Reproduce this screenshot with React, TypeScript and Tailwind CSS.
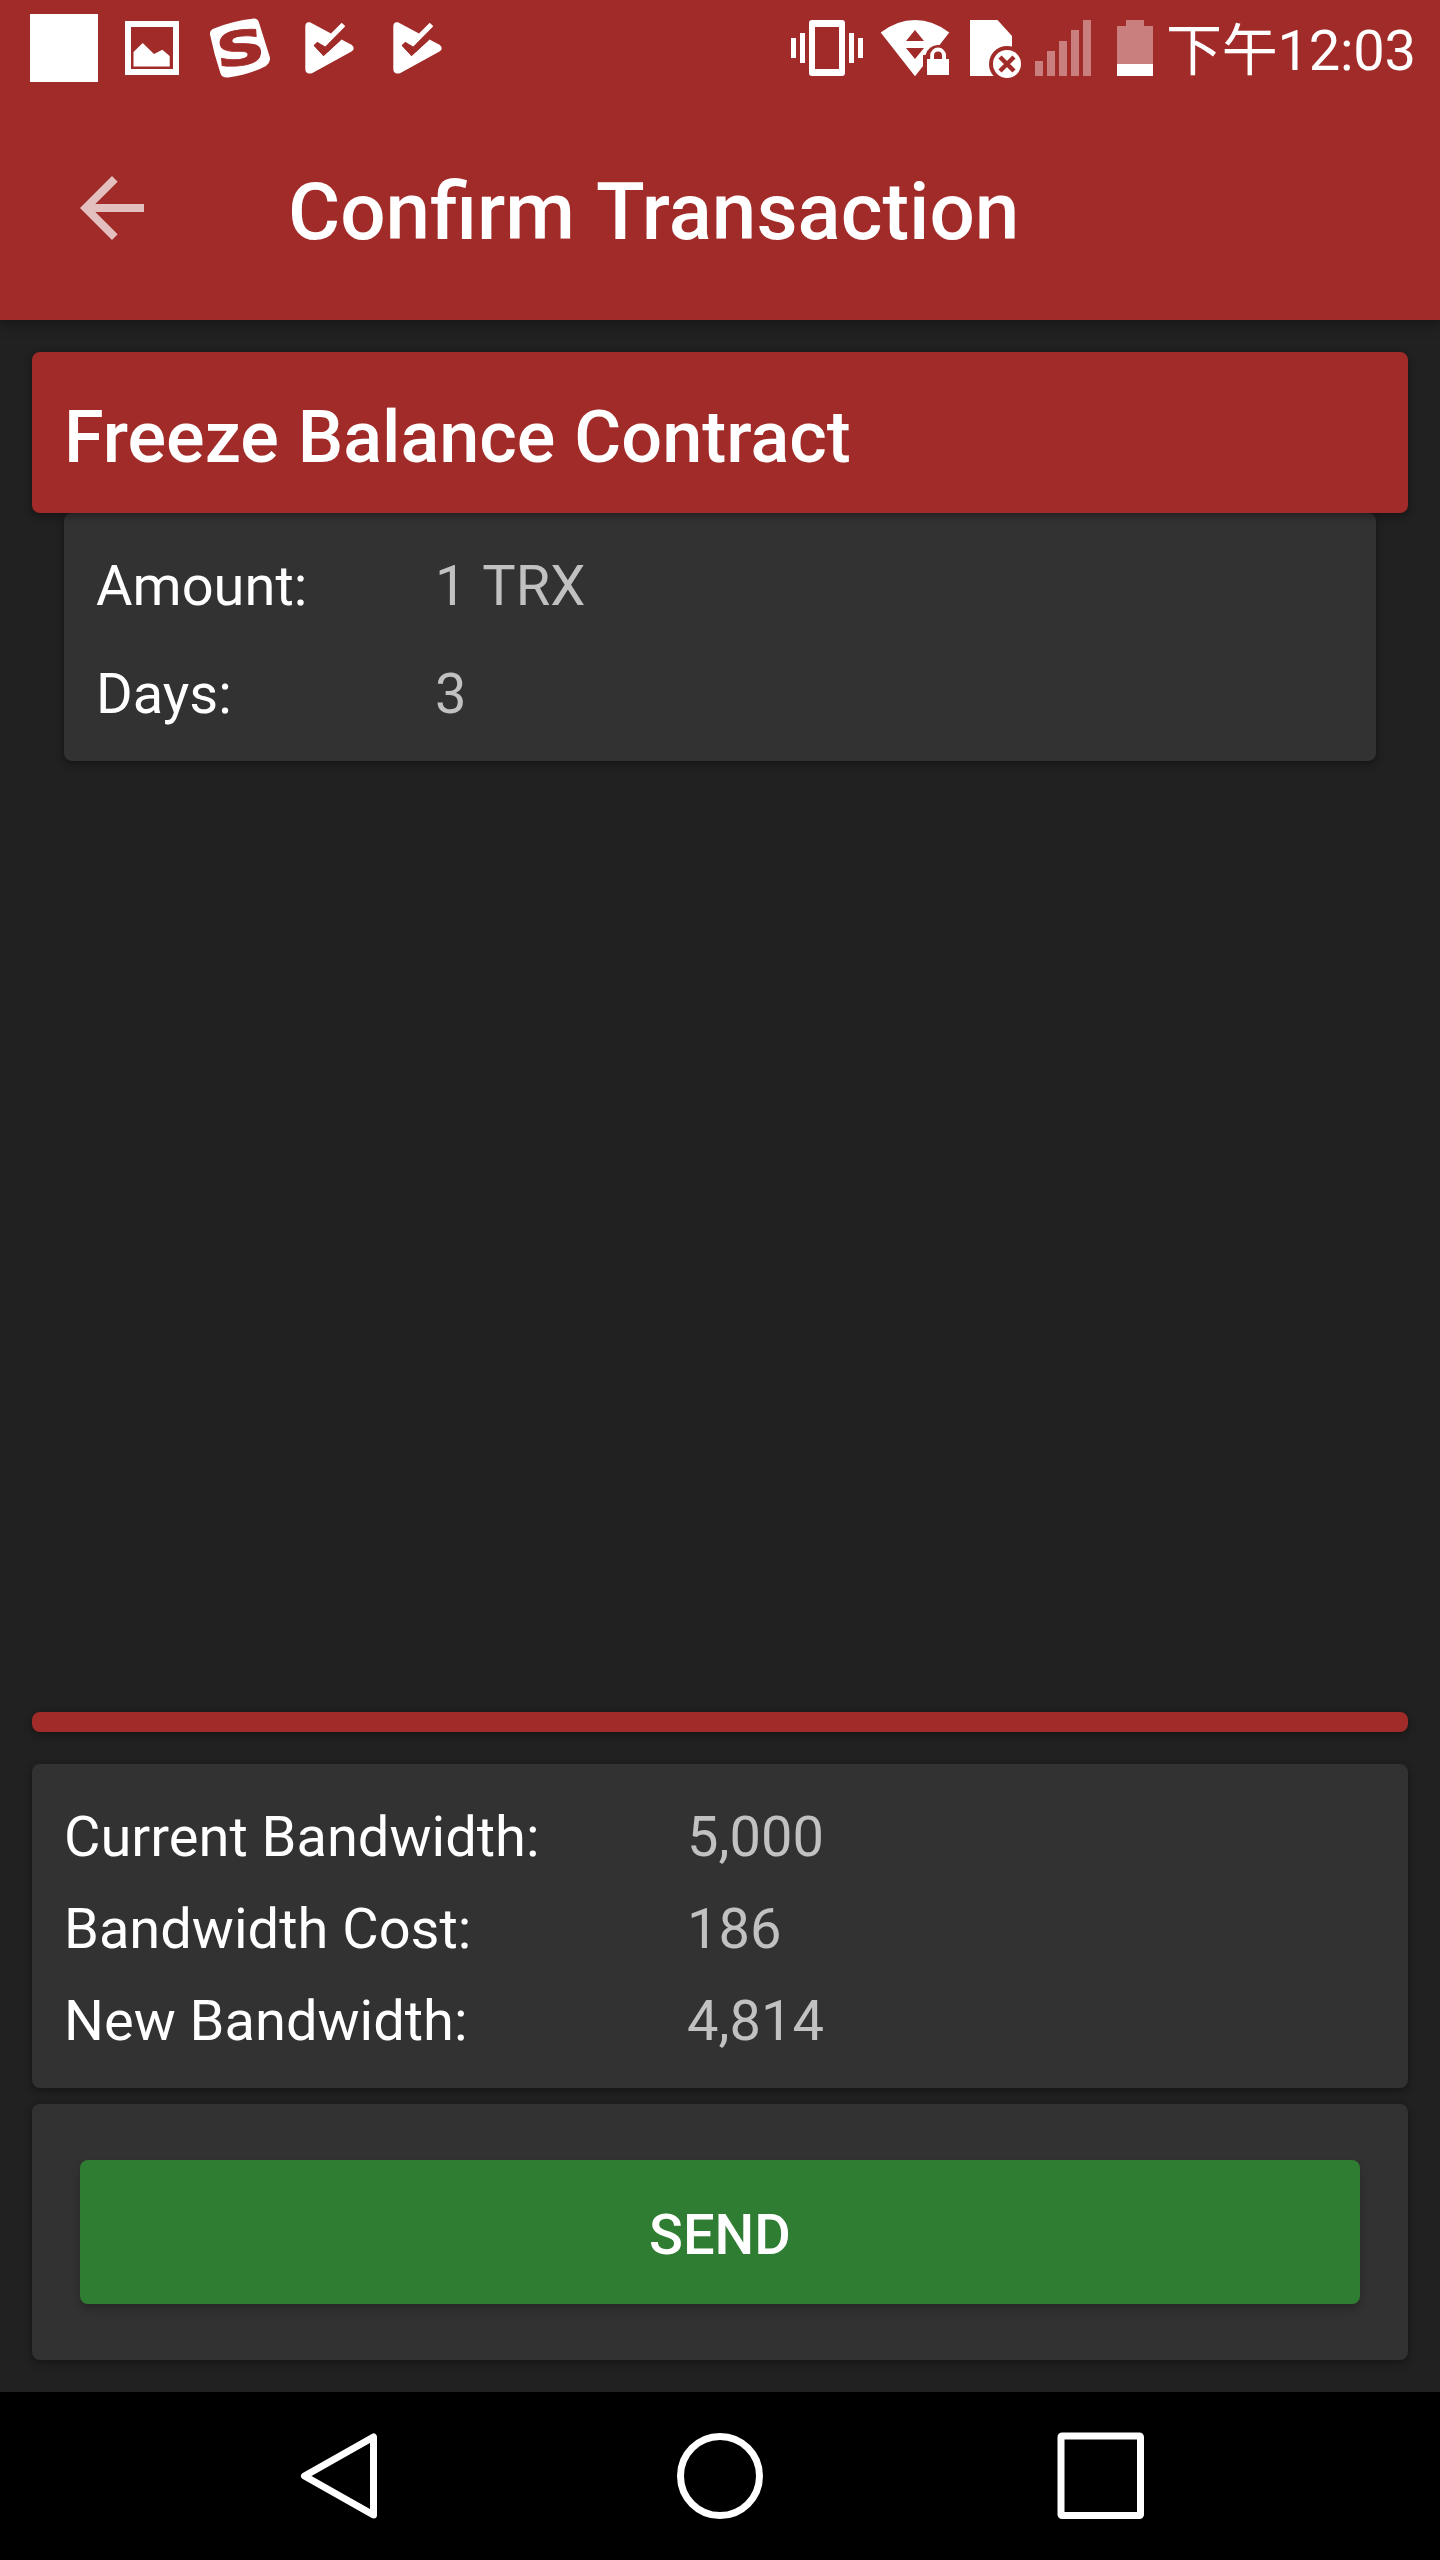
import type { ReactNode } from "react";

function Row({ label, value, labelWidth }: { label: string; value: string; labelWidth: string }) {
  return (
    <div className="flex text-[56px] leading-[66px]">
      <span className={`${labelWidth} shrink-0 text-white`}>{label}</span>
      <span className="text-[#c1c1c1] [word-spacing:3px]">{value}</span>
    </div>
  );
}

function Card({ className, children }: { className: string; children?: ReactNode }) {
  return (
    <div className={`rounded-lg shadow-[0_4px_8px_rgba(0,0,0,0.28),0_0_4px_rgba(0,0,0,0.15)] ${className}`}>{children}</div>
  );
}

function PlayCheck() {
  return (
    <svg className="h-24 w-[50px]" viewBox="305 0 50 96" fill="#fff">
      <path d="M305.3 26.5Q305.3 21.5 310 22.3L331 33.4L341.7 22.7L345.3 26.3L325.3 46.5L317.3 41.9L313.7 45.6L323.5 56L341.5 39.5L351.5 44.8Q356 48.5 351.5 51.5L312 73.2Q305.3 75 305.3 68.5Z" />
      <path fill="#a12b28" d="M317.3 41.9L325.5 48.2L335 38L341.5 39.5L323.6 56L313.7 45.6Z" />
    </svg>
  );
}

function StatusBar() {
  return (
    <div className="flex h-24 items-center pl-[30px]">
      <div className="mr-[27px] size-[68px] bg-white" />
      <svg className="mr-[31px] h-24 w-[54px]" viewBox="125 0 54 96">
        <rect x="128" y="24" width="48" height="48" fill="none" stroke="#fff" strokeWidth="6" />
        <path fill="#fff" d="M133.5 52L142.7 43L154 54L162.3 49.8L169.7 56V66.5H133.5Z" />
      </svg>
      <svg className="mr-[35px] h-24 w-[60px]" viewBox="210 0 60 96">
        <path fill="#fff" d="M214 28.5Q232 21 254 18.5Q257.5 18.3 258.8 22L269.8 57Q271 62 266 66Q250 74.5 228 77.5Q222 78 220.5 73.5Q214 54 209.9 34Q209.8 30 214 28.5Z" />
        <text
          x="0"
          y="0"
          transform="translate(240.5 47.5) rotate(-8) skewX(-4) scale(1.38 0.94) translate(-18 18.5)"
          fill="#a12b28"
          stroke="#a12b28"
          strokeWidth="0.8"
          fontFamily="'DejaVu Sans'"
          fontWeight="700"
          fontSize="50"
        >
          S
        </text>
      </svg>
      <div className="flex gap-[38px]">
        <PlayCheck />
        <PlayCheck />
      </div>
      <svg className="ml-[348px] h-24 w-[72px]" viewBox="791 0 72 96" fill="#fff">
        <path d="M809 23a3 3 0 0 1 3-3h30a3 3 0 0 1 3 3v50a3 3 0 0 1-3 3h-30a3 3 0 0 1-3-3zM815 27v42h24V27z" fillRule="evenodd" />
        <path d="M791 38h5v20h-5zM800 33h5v30h-5zM849 33h5v30h-5zM858 38h5v20h-5z" />
      </svg>
      <svg className="ml-[17px] h-24 w-[70px]" viewBox="880 0 70 96">
        <path fill="#fff" d="M880.7 32.5Q897 20 915 20T949.3 32.5L915 76.3Z" />
        <path fill="#a12b28" d="M915 30l9 11h-18zM915 59l9-11h-18zM923 76V55h2.5A12.7 12.7 0 0 1 950.5 56V76z" />
        <path fill="#fff" d="M927 59h3.2v-3.5a7.9 7.9 0 0 1 15.8 0V59h3v16h-22zM934 59h8v-3.5a4 4 0 0 0-8 0z" fillRule="evenodd" />
      </svg>
      <svg className="ml-[20px] h-24 w-[51px]" viewBox="970 0 51 96">
        <path fill="#fff" d="M970 20h27.5L1012 36V76H970z" />
        <circle cx="1007" cy="64" r="18" fill="#a12b28" />
        <circle cx="1007" cy="64" r="14" fill="#fff" />
        <path stroke="#a12b28" strokeWidth="4.5" d="M1000 57l14 14M1014 57l-14 14" />
      </svg>
      <svg className="ml-[14px] h-24 w-[56px]" viewBox="1035 0 56 96" fill="#c87f7d">
        <path d="M1035 61h8v15h-8zM1047 51h8v25h-8zM1059 41h8v35h-8zM1071 30h8v46h-8zM1083 20h8v56h-8z" />
      </svg>
      <svg className="ml-[26px] h-24 w-[36px]" viewBox="1117 0 36 96">
        <path fill="#c87f7d" d="M1126 20h18v6h9v38h-36V26h9z" />
        <path fill="#fff" d="M1117 64h36v12h-36z" />
      </svg>
      <span className="mt-1.5 ml-[13px] text-[56px] leading-[66px] tracking-[-0.25px] whitespace-nowrap text-white">下午12:03</span>
    </div>
  );
}

export default function App() {
  return (
    <div className="flex h-[2560px] w-[1440px] flex-col overflow-hidden bg-[#212121] font-[Roboto,'Noto_Sans_CJK_SC',sans-serif]">
      <header className="h-80 shrink-0 bg-[#a12b28] shadow-[0_4px_12px_rgba(0,0,0,0.35)]">
        <StatusBar />
        <div className="flex h-56 items-center pl-16">
          <svg className="size-24" viewBox="0 0 24 24" fill="#e3bfbe">
            <path d="M20 11H7.83l5.59-5.59L12 4l-8 8 8 8 1.41-1.41L7.83 13H20v-2z" />
          </svg>
          <h1 className="mt-2 ml-32 text-[80px] leading-[94px] font-medium text-white [word-spacing:3px]">Confirm Transaction</h1>
        </div>
      </header>

      <main className="flex flex-1 flex-col p-8">
        <Card className="relative z-10 flex h-[161px] shrink-0 items-center bg-[#a12b28] pl-8">
          <h2 className="mt-2.5 text-[72px] leading-[84px] font-medium text-white [word-spacing:1px]">Freeze Balance Contract</h2>
        </Card>
        <Card className="mx-8 flex h-[248px] shrink-0 flex-col gap-[42px] bg-[#323232] px-8 pt-10">
          <Row label="Amount:" value="1 TRX" labelWidth="w-[339px]" />
          <Row label="Days:" value="3" labelWidth="w-[339px]" />
        </Card>

        <Card className="mt-auto h-5 shrink-0 bg-[#a12b28]" />
        <Card className="mt-8 flex h-[324px] shrink-0 flex-col gap-[26px] bg-[#323232] px-8 pt-10">
          <Row label="Current Bandwidth:" value="5,000" labelWidth="w-[623px]" />
          <Row label="Bandwidth Cost:" value="186" labelWidth="w-[623px]" />
          <Row label="New Bandwidth:" value="4,814" labelWidth="w-[623px]" />
        </Card>
        <Card className="mt-4 shrink-0 bg-[#323232] px-12 py-14">
          <button className="flex h-36 w-full items-center justify-center rounded-lg bg-[#2e7d32] pt-1.5 text-[56px] leading-[66px] font-medium text-white shadow-[0_6px_8px_rgba(0,0,0,0.22)]">
            SEND
          </button>
        </Card>
      </main>

      <nav className="flex h-42 shrink-0 items-center bg-black">
        <svg className="ml-[300px] h-[88px] w-[78px]" viewBox="0 0 78 88" fill="none" stroke="#fff" strokeWidth="7" strokeLinejoin="round">
          <path d="M4.5 44L73.5 5V83Z" />
        </svg>
        <svg className="ml-[298px] size-[88px]" viewBox="0 0 88 88" fill="none" stroke="#fff" strokeWidth="7">
          <circle cx="44" cy="44" r="39.5" />
        </svg>
        <svg className="ml-[293px] size-[88px]" viewBox="0 0 88 88" fill="none" stroke="#fff" strokeWidth="7">
          <rect x="4" y="4" width="79.5" height="79.5" rx="1" />
        </svg>
      </nav>
    </div>
  );
}
